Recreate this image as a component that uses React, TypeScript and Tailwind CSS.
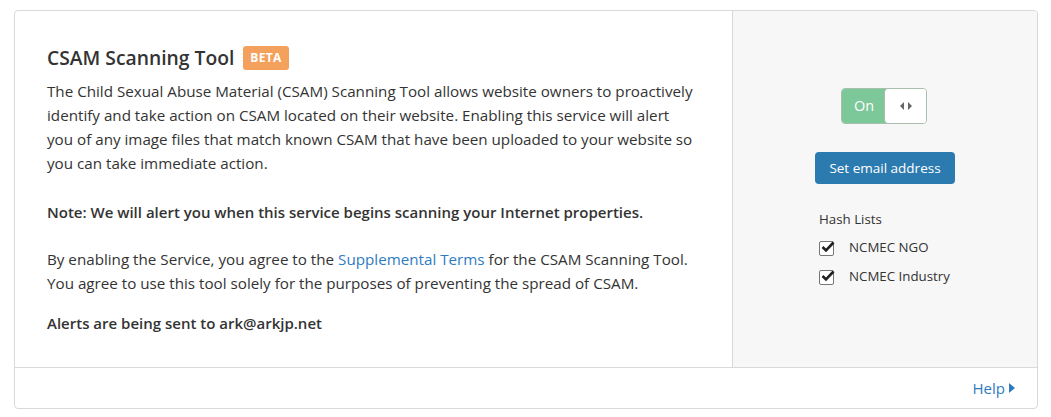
import React from "react";

export default function App() {
  return (
    <div className="w-[1051px] h-[417px] bg-white pt-[10px] pl-[14px]" style={{ fontFamily: '"Open Sans", "Noto Sans", sans-serif' }}>
      <div className="w-[1024px] h-[399px] border border-[#d9d9d9] rounded-[4px] flex flex-col overflow-hidden">
        <div className="flex h-[357px] border-b border-[#d9d9d9]">
          <div className="w-[717px] pl-[32px] pr-[16px] pt-[33px] text-[#333] text-[15.2px] leading-[24px]">
            <div className="flex items-center gap-[9px] h-[28px]">
              <span className="text-[19.3px] font-semibold text-[#333]">CSAM Scanning Tool</span>
              <span className="bg-[#f3a15d] text-white text-[12px] font-bold rounded-[3px] px-[7px] h-[24px] flex items-center tracking-wide">BETA</span>
            </div>
            <div className="w-[649px]">
              <p className="mt-[7px]">The Child Sexual Abuse Material (CSAM) Scanning Tool allows website owners to proactively identify and take action on CSAM located on their website. Enabling this service will alert you of any image files that match known CSAM that have been uploaded to your website so you can take immediate action.</p>
              <p className="mt-[25px] font-semibold text-[15px]">Note: We will alert you when this service begins scanning your Internet properties.</p>
              <p className="mt-[23px]">By enabling the Service, you agree to the <span className="text-[#2f7bbf]">Supplemental Terms</span> for the CSAM Scanning Tool. You agree to use this tool solely for the purposes of preventing the spread of CSAM.</p>
              <p className="mt-[16px] font-semibold text-[15px]">Alerts are being sent to ark@arkjp.net</p>
            </div>
          </div>
          <div className="flex-1 bg-[#f7f7f7] border-l border-[#d9d9d9] flex flex-col items-center pt-[77px]">
            <div className="flex h-[36px] w-[86px] border border-[#a8bfae] rounded-[4px] overflow-hidden -ml-[2px]">
              <div className="w-[44px] bg-[#7cc899] text-white text-[14.5px] flex items-center justify-center">On</div>
              <div className="flex-1 bg-white border-l border-[#a8bfae] rounded-l-[4px] flex items-center justify-center -ml-[2px]">
                <svg width="12" height="8" viewBox="0 0 12 8"><path d="M0 4 L4 0 L4 8 Z" fill="#666" /><path d="M12 4 L8 0 L8 8 Z" fill="#666" /></svg>
              </div>
            </div>
            <button className="mt-[28px] w-[140px] h-[32px] bg-[#2c7bb0] text-white text-[13.5px] rounded-[4px]">Set email address</button>
            <div className="self-start ml-[86px] mt-[25px] text-[13.3px] text-[#333]">
              <div className="leading-[20px]">Hash Lists</div>
              <div className="flex items-center mt-[9px] h-[20px]">
                <Check />
                <span className="ml-[15px]">NCMEC NGO</span>
              </div>
              <div className="flex items-center mt-[9px] h-[20px]">
                <Check />
                <span className="ml-[15px]">NCMEC Industry</span>
              </div>
            </div>
          </div>
        </div>
        <div className="flex-1 flex items-center justify-end pr-[22px]">
          <span className="text-[#2f7bbf] text-[15px] flex items-center gap-[4px]">Help
            <svg width="6" height="10" viewBox="0 0 6 10"><path d="M0 0 L6 5 L0 10 Z" fill="#2f7bbf" /></svg>
          </span>
        </div>
      </div>
    </div>
  );
}

function Check() {
  return (
    <span className="w-[15px] h-[15px] border border-[#777] rounded-[2px] bg-white relative flex items-center justify-center">
      <svg width="14" height="12" viewBox="0 0 14 12" className="absolute -top-[1px] left-[1px]"><path d="M1.5 6 L5 9.5 L12.5 1.5" stroke="#222" strokeWidth="2.6" fill="none" /></svg>
    </span>
  );
}
